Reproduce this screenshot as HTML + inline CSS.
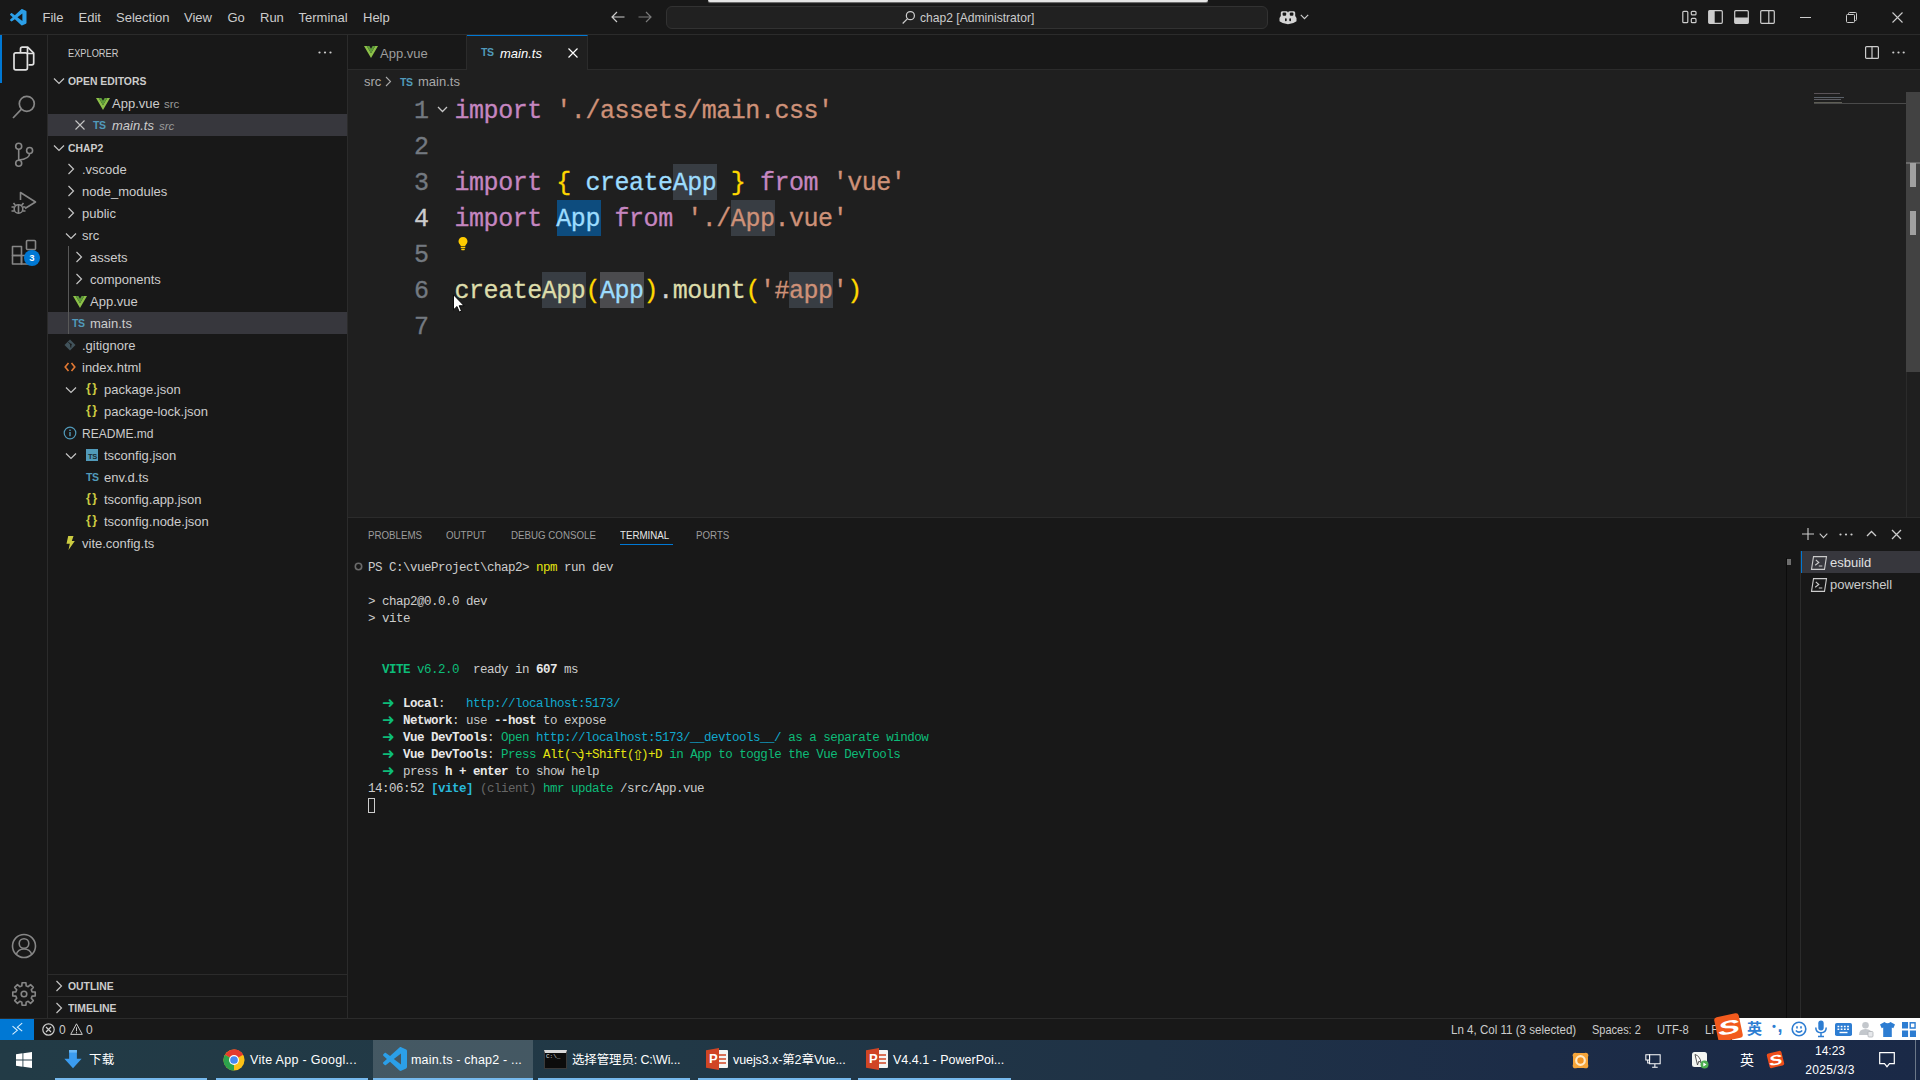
<!DOCTYPE html>
<html lang="en">
<head>
<meta charset="utf-8">
<title>main.ts - chap2 - Visual Studio Code</title>
<style>
*{box-sizing:border-box;margin:0;padding:0}
html,body{width:1920px;height:1080px;overflow:hidden;background:#181818}
body{position:relative;font-family:"Liberation Sans","Noto Sans CJK SC",sans-serif;font-size:13px;color:#cccccc;-webkit-font-smoothing:antialiased}
.abs{position:absolute}
svg{display:block;overflow:visible}
/* title bar */
#titlebar{position:absolute;left:0;top:0;width:1920px;height:35px;background:#181818;border-bottom:1px solid #2b2b2b}
#titlebar .menu{position:absolute;top:0;height:34px;line-height:36px;font-size:13px;color:#cccccc;white-space:nowrap}
#cmdcenter{position:absolute;left:666px;top:6px;width:602px;height:23px;border:1px solid #323232;border-radius:6px;background:#212121}
#cmdcenter span{position:absolute;left:0;top:1px;line-height:21px;font-size:12.1px;color:#cccccc;white-space:nowrap}
#whitebar{position:absolute;left:708px;top:0;width:500px;height:2px;background:#e6e6e6;border-radius:0 0 3px 3px;box-shadow:0 1px 1px #777}
/* activity bar */
#activity{position:absolute;left:0;top:35px;width:48px;height:983px;background:#181818;border-right:1px solid #2b2b2b}
#activity .ind{position:absolute;left:0;top:0;width:2px;height:48px;background:#0078d4}
/* sidebar */
#sidebar{position:absolute;left:48px;top:35px;width:300px;height:983px;background:#181818;border-right:1px solid #2b2b2b;overflow:hidden}
.row{position:absolute;left:0;width:299px;height:22px;line-height:22px;font-size:13px;color:#cccccc;white-space:nowrap}
.row .t{position:absolute;top:1px}
.row.sel{background:#37373d}
.hdr{font-weight:bold;font-size:11px;color:#cccccc;transform:scaleX(.945);transform-origin:0 50%}
.dim{color:#9a9a9a;font-size:11.5px}
.ic{position:absolute}
/* editor */
#tabs{position:absolute;left:348px;top:35px;width:1572px;height:35px;background:#181818;border-bottom:1px solid #2b2b2b}
.tab{position:absolute;top:0;height:35px;line-height:37px;font-size:13px;white-space:nowrap}
#crumbs{position:absolute;left:348px;top:70px;width:1572px;height:22px;background:#1f1f1f;line-height:24px;font-size:13px;color:#a9a9a9}
#editor{position:absolute;left:348px;top:92px;width:1572px;height:425px;background:#1f1f1f;overflow:hidden}
.ln{position:absolute;left:0;width:80.5px;text-align:right;height:36px;line-height:39.5px;font-family:"Liberation Mono",monospace;font-size:25px;letter-spacing:-0.46px;color:#737980;white-space:pre;-webkit-text-stroke:.3px}
.cl{position:absolute;left:106.5px;height:36px;line-height:39.5px;font-family:"Liberation Mono",monospace;font-size:25px;letter-spacing:-0.46px;color:#d4d4d4;white-space:pre;-webkit-text-stroke:.3px}
.k{color:#c586c0}.s{color:#ce9178}.v{color:#9cdcfe}.f{color:#dcdcaa}.y{color:#ffd700}
.hl{position:absolute;height:36px;background:#383d43}
/* panel */
#panel{position:absolute;left:348px;top:517px;width:1572px;height:501px;background:#181818}
.ptab{position:absolute;top:7px;height:22px;line-height:22px;font-size:11px;color:#9d9d9d;white-space:nowrap;transform:scaleX(.885);transform-origin:0 50%}
.tl{position:absolute;left:20px;height:17px;line-height:17px;font-family:"Liberation Mono","DejaVu Sans Mono","DejaVu Sans",monospace;font-size:12.5px;letter-spacing:-0.5px;color:#cccccc;white-space:pre}
.tl b{font-weight:bold;color:#e8e8e8}
.w1{display:inline-block;width:7px;height:17px;vertical-align:top;text-align:center;letter-spacing:0;font-family:"DejaVu Sans",sans-serif;font-size:11px;line-height:17px;white-space:nowrap}
.ar{font-size:15px;text-indent:0;line-height:15px;overflow:visible}
.tl .g{color:#0dbc79}.tl .c{color:#11a8cd}.tl .yy{color:#e5e510}.tl .bb{color:#29b8db}.tl .gr{color:#666666}
/* status */
#status{position:absolute;left:0;top:1018px;width:1920px;height:22px;background:#181818;border-top:1px solid #2b2b2b;font-size:12px;line-height:21px;color:#cccccc;white-space:nowrap}
#status .t{position:absolute;top:1px;transform-origin:0 50%}
/* taskbar */
#taskbar{position:absolute;left:0;top:1040px;width:1920px;height:40px;background:linear-gradient(90deg,#223b46 0%,#213846 35%,#1f3246 60%,#1c2c47 80%,#1a2947 100%);font-size:12px;color:#ffffff;white-space:nowrap}
.tb{position:absolute;top:0;height:40px}
.tb .ul{position:absolute;left:0;right:0;bottom:0;height:2px;background:#76b9ed}
.tb .lbl{position:absolute;top:1px;line-height:38px;font-size:12.5px;letter-spacing:.3px;color:#fff;font-family:"Liberation Sans","Noto Sans CJK SC",sans-serif}
</style>
</head>
<body>
<div id="titlebar">
  <svg class="abs" style="left:10px;top:9px" width="16.500" height="16.500" viewBox="0 0 100 100"><path d="M96.5 10.8 75.9 0.9c-2.4-1.2-5.200-0.700-7.100 1.200L29.400 38.000 12.200 25.000c-1.600-1.200-3.800-1.100-5.300 0.200L1.400 30.200c-1.800 1.600-1.800 4.500 0 6.100L16.300 50.000 1.400 63.600c-1.800 1.600-1.800 4.500 0 6.100l5.500 5.000c1.500 1.400 3.700 1.500 5.300 0.200l17.200-13.000 39.400 35.900c1.900 1.900 4.700 2.400 7.100 1.200l20.600-9.900c2.200-1.000 3.500-3.200 3.500-5.600V16.400c0-2.400-1.400-4.600-3.500-5.600zM75.000 72.700 45.100 50.000 75.000 27.300z" fill="#2b9fe8"/></svg>
  <span class="menu" style="left:42.500px">File</span>
  <span class="menu" style="left:78.500px">Edit</span>
  <span class="menu" style="left:116px">Selection</span>
  <span class="menu" style="left:184px">View</span>
  <span class="menu" style="left:227.500px">Go</span>
  <span class="menu" style="left:260px">Run</span>
  <span class="menu" style="left:298.500px">Terminal</span>
  <span class="menu" style="left:363px">Help</span>
  <!-- nav arrows -->
  <svg class="abs" style="left:610px;top:9px" width="16" height="16" viewBox="0 0 16 16" fill="none" stroke="#cccccc" stroke-width="1.200"><path d="M14.500 8H2M7 3 2 8l5 5"/></svg>
  <svg class="abs" style="left:637px;top:9px" width="16" height="16" viewBox="0 0 16 16" fill="none" stroke="#7a7a7a" stroke-width="1.200"><path d="M1.500 8H14M9 3l5 5-5 5"/></svg>
  <div id="cmdcenter">
    <svg class="abs" style="left:234px;top:3px" width="15" height="15" viewBox="0 0 16 16" fill="none" stroke="#cccccc" stroke-width="1.300"><circle cx="10" cy="6" r="4.300"/><path d="M7 9.200 1.800 14.400"/></svg>
    <span style="left:253px">chap2 [Administrator]</span>
  </div>
  <div id="whitebar"></div>
  <!-- copilot -->
  <svg class="abs" style="left:1279px;top:9px" width="18" height="16" viewBox="0 0 18 16"><path d="M3.200 2.200h4.300q1.500 0 1.500 1.500 0-1.500 1.500-1.500h4.300q1.400 0 1.400 1.500v3.200l1.300 2.200v3.200q-3.500 2.900-8.500 2.900T0.500 12.300V9.100l1.300-2.200V3.700q0-1.500 1.400-1.500z" fill="#d4d4d4"/><rect x="3.600" y="3.600" width="3.600" height="3.200" rx="1" fill="#181818"/><rect x="10.800" y="3.600" width="3.600" height="3.200" rx="1" fill="#181818"/><rect x="6" y="9.300" width="1.700" height="3" rx=".8" fill="#181818"/><rect x="10.300" y="9.300" width="1.700" height="3" rx=".8" fill="#181818"/></svg>
  <svg class="abs" style="left:1300px;top:14px" width="9" height="6" viewBox="0 0 9 6" fill="none" stroke="#cccccc" stroke-width="1.200"><path d="M.8.800 4.500 4.600 8.200.8"/></svg>
  <!-- layout controls -->
  <svg class="abs" style="left:1682px;top:10px" width="15" height="14" viewBox="0 0 15 14" fill="none" stroke="#cccccc" stroke-width="1.200"><rect x=".8" y="1.300" width="5" height="11.400" rx="1"/><rect x="9.300" y="1.300" width="4.700" height="3.600" rx="1"/><rect x="9.300" y="8.400" width="4.700" height="4.300" rx="1"/></svg>
  <svg class="abs" style="left:1708px;top:10px" width="15" height="14" viewBox="0 0 15 14"><rect x=".7" y=".7" width="13.600" height="12.600" rx="1" fill="none" stroke="#cccccc" stroke-width="1.200"/><rect x=".7" y=".7" width="6" height="12.600" fill="#cccccc"/></svg>
  <svg class="abs" style="left:1734px;top:10px" width="15" height="14" viewBox="0 0 15 14"><rect x=".7" y=".7" width="13.600" height="12.600" rx="1" fill="none" stroke="#cccccc" stroke-width="1.200"/><rect x=".7" y="7.500" width="13.600" height="5.800" fill="#cccccc"/></svg>
  <svg class="abs" style="left:1760px;top:10px" width="15" height="14" viewBox="0 0 15 14" fill="none" stroke="#cccccc" stroke-width="1.200"><rect x=".7" y=".7" width="13.600" height="12.600" rx="1"/><path d="M8.800.7v12.600"/></svg>
  <!-- window controls -->
  <svg class="abs" style="left:1800px;top:17px" width="11" height="1" viewBox="0 0 11 1"><rect width="11" height="1" fill="#cccccc"/></svg>
  <svg class="abs" style="left:1846px;top:12px" width="11" height="11" viewBox="0 0 11 11" fill="none" stroke="#cccccc" stroke-width="1"><rect x=".5" y="2.500" width="8" height="8" rx="1"/><path d="M2.500 2.500V1.500q0-1 1-1h6q1 0 1 1v6q0 1-1 1H8.500"/></svg>
  <svg class="abs" style="left:1892px;top:12px" width="11" height="11" viewBox="0 0 11 11" fill="none" stroke="#cccccc" stroke-width="1.100"><path d="M.5.500l10 10M10.500.5l-10 10"/></svg>
</div>
<div id="activity">
  <div class="ind"></div>
  <!-- explorer (files) -->
  <svg class="abs" style="left:12px;top:11px" width="24" height="26" viewBox="0 0 24 26" fill="none" stroke="#e0e0e0" stroke-width="1.700" stroke-linejoin="round"><path d="M8.500 6V3q0-1.800 1.800-1.800h5.400l6 6V17q0 1.800-1.800 1.800H16.500"/><path d="M15.500 1.500v6h6"/><path d="M3.800 6.800h9.800q1.800 0 1.800 1.800v13.400q0 1.800-1.800 1.800H3.800Q2 23.800 2 22V8.600q0-1.800 1.800-1.800z"/></svg>
  <!-- search -->
  <svg class="abs" style="left:11px;top:59px" width="26" height="26" viewBox="0 0 26 26" fill="none" stroke="#868686" stroke-width="1.700"><circle cx="15.800" cy="9.800" r="7.500"/><path d="M10.500 15.200 2 24"/></svg>
  <!-- source control -->
  <svg class="abs" style="left:12px;top:106px" width="24" height="28" viewBox="0 0 24 28" fill="none" stroke="#868686" stroke-width="1.600"><circle cx="6.700" cy="5.300" r="3"/><circle cx="6.700" cy="22.300" r="3"/><circle cx="17.600" cy="9.500" r="3"/><path d="M6.700 8.300v11M17.600 12.500q0 5.500-10.900 6.500"/></svg>
  <!-- run & debug -->
  <svg class="abs" style="left:10px;top:154px" width="28" height="28" viewBox="0 0 28 28" fill="none" stroke="#868686" stroke-width="1.600" stroke-linejoin="round"><path d="M10.500 11V3.500L25.500 13 15 19.500"/><circle cx="8.500" cy="20" r="4.300"/><path d="M8.500 15.700v8.600M4.200 18H1.500M4.200 22H1.500M12.800 18h2.700M12.800 22h2.700M5.500 16.500 3.500 14M11.500 16.500l2-2.500"/></svg>
  <!-- extensions -->
  <svg class="abs" style="left:11px;top:204px" width="26" height="26" viewBox="0 0 26 26" fill="none" stroke="#868686" stroke-width="1.600" stroke-linejoin="round"><rect x="1.500" y="7.500" width="9" height="9"/><rect x="1.500" y="16.500" width="9" height="8.500"/><rect x="10.500" y="16.500" width="9" height="8.500"/><rect x="15.500" y="1.500" width="9" height="9" rx="1"/></svg>
  <div class="abs" style="left:24px;top:215px;width:16px;height:16px;border-radius:8px;background:#0078d4;color:#fff;font-size:9.500px;font-weight:bold;text-align:center;line-height:16px">3</div>
  <!-- account -->
  <svg class="abs" style="left:11px;top:898px" width="26" height="26" viewBox="0 0 26 26" fill="none" stroke="#868686" stroke-width="1.600"><circle cx="13" cy="13" r="11.500"/><circle cx="13" cy="10.500" r="4.800"/><path d="M5.200 21.500q1.800-5.500 7.800-5.500t7.800 5.500"/></svg>
  <!-- settings gear -->
  <svg class="abs" style="left:11px;top:946px" width="26" height="26" viewBox="0 0 26 26" fill="none" stroke="#868686" stroke-width="1.600" stroke-linejoin="round"><circle cx="13" cy="13" r="2.800"/><path d="M10.84 4.88 L11.07 1.76 L14.93 1.76 L15.16 4.88 L17.21 5.73 L19.58 3.69 L22.31 6.42 L20.27 8.79 L21.12 10.84 L24.24 11.07 L24.24 14.93 L21.12 15.16 L20.27 17.21 L22.31 19.58 L19.58 22.31 L17.21 20.27 L15.16 21.12 L14.93 24.24 L11.07 24.24 L10.84 21.12 L8.79 20.27 L6.42 22.31 L3.69 19.58 L5.73 17.21 L4.88 15.16 L1.76 14.93 L1.76 11.07 L4.88 10.84 L5.73 8.79 L3.69 6.42 L6.42 3.69 L8.79 5.73z"/></svg>
</div>
<div id="sidebar">
<div class="row" style="top:6px"><span class="t" style="left:20px;font-size:11px;color:#cccccc;transform:scaleX(.84);transform-origin:0 50%">EXPLORER</span><svg class="ic" style="left:270px;top:10px" width="14" height="3" viewBox="0 0 14 3" fill="#cccccc"><circle cx="1.500" cy="1.500" r="1.100"/><circle cx="7" cy="1.500" r="1.100"/><circle cx="12.500" cy="1.500" r="1.100"/></svg></div>
<div class="row" style="top:34px"><svg class="ic" style="left:5px;top:8px" width="12" height="8" viewBox="0 0 12 8" fill="none" stroke="#c5c5c5" stroke-width="1.200"><path d="M1 1.500 6 6.500 11 1.500"/></svg><span class="t hdr" style="left:20px">OPEN EDITORS</span></div>
<div class="row" style="top:57px"><svg class="ic" style="left:48px;top:6px" width="14" height="12" viewBox="0 0 14 12"><path d="M0 0h2.800L7 7.200 11.200 0H14L7 12z" fill="#8dc149"/><path d="M2.800 0h2.600L7 2.800 8.600 0h2.600L7 7.200z" fill="#5f9e3a"/></svg><span class="t" style="left:64px">App.vue</span><span class="t dim" style="left:116px">src</span></div>
<div class="row sel" style="top:79px"><svg class="ic" style="left:27px;top:6px" width="10" height="10" viewBox="0 0 10 10" fill="none" stroke="#c5c5c5" stroke-width="1.100"><path d="M.5.500l9 9M9.500.5l-9 9"/></svg><span class="ic" style="left:45px;top:0px;font-size:10.5px;font-weight:bold;color:#519aba;line-height:22px;letter-spacing:-0.300px">TS</span><span class="t" style="left:64px;font-style:italic">main.ts</span><span class="t dim" style="left:111px;font-style:italic">src</span></div>
<div class="row" style="top:101px"><svg class="ic" style="left:5px;top:8px" width="12" height="8" viewBox="0 0 12 8" fill="none" stroke="#c5c5c5" stroke-width="1.200"><path d="M1 1.500 6 6.500 11 1.500"/></svg><span class="t hdr" style="left:20px">CHAP2</span></div>
<div class="row" style="top:123px"><svg class="ic" style="left:19px;top:5px" width="8" height="12" viewBox="0 0 8 12" fill="none" stroke="#c5c5c5" stroke-width="1.200"><path d="M1.500 1 6.500 6 1.500 11"/></svg><span class="t" style="left:34px">.vscode</span></div>
<div class="row" style="top:145px"><svg class="ic" style="left:19px;top:5px" width="8" height="12" viewBox="0 0 8 12" fill="none" stroke="#c5c5c5" stroke-width="1.200"><path d="M1.500 1 6.500 6 1.500 11"/></svg><span class="t" style="left:34px">node_modules</span></div>
<div class="row" style="top:167px"><svg class="ic" style="left:19px;top:5px" width="8" height="12" viewBox="0 0 8 12" fill="none" stroke="#c5c5c5" stroke-width="1.200"><path d="M1.500 1 6.500 6 1.500 11"/></svg><span class="t" style="left:34px">public</span></div>
<div class="row" style="top:189px"><svg class="ic" style="left:17px;top:8px" width="12" height="8" viewBox="0 0 12 8" fill="none" stroke="#c5c5c5" stroke-width="1.200"><path d="M1 1.500 6 6.500 11 1.500"/></svg><span class="t" style="left:34px">src</span></div>
<div class="row" style="top:211px"><svg class="ic" style="left:27px;top:5px" width="8" height="12" viewBox="0 0 8 12" fill="none" stroke="#c5c5c5" stroke-width="1.200"><path d="M1.500 1 6.500 6 1.500 11"/></svg><span class="t" style="left:42px">assets</span></div>
<div class="row" style="top:233px"><svg class="ic" style="left:27px;top:5px" width="8" height="12" viewBox="0 0 8 12" fill="none" stroke="#c5c5c5" stroke-width="1.200"><path d="M1.500 1 6.500 6 1.500 11"/></svg><span class="t" style="left:42px">components</span></div>
<div class="row" style="top:255px"><svg class="ic" style="left:25px;top:6px" width="14" height="12" viewBox="0 0 14 12"><path d="M0 0h2.800L7 7.200 11.200 0H14L7 12z" fill="#8dc149"/><path d="M2.800 0h2.600L7 2.800 8.600 0h2.600L7 7.200z" fill="#5f9e3a"/></svg><span class="t" style="left:42px">App.vue</span></div>
<div class="row sel" style="top:277px"><span class="ic" style="left:24px;top:0px;font-size:10.5px;font-weight:bold;color:#519aba;line-height:22px;letter-spacing:-0.300px">TS</span><span class="t" style="left:42px">main.ts</span></div>
<div class="row" style="top:299px"><svg class="ic" style="left:16px;top:5px" width="12" height="12" viewBox="0 0 12 12"><path d="M6 .5 11.500 6 6 11.500.5 6z" fill="#41535b"/><path d="M4.500 3.200 6.800 5.500M6.800 5.500v3" stroke="#181818" stroke-width="1" fill="none"/><circle cx="6.800" cy="5.500" r=".9" fill="#181818"/></svg><span class="t" style="left:34px">.gitignore</span></div>
<div class="row" style="top:321px"><svg class="ic" style="left:16px;top:6px" width="12" height="10" viewBox="0 0 12 10" fill="none" stroke="#e37933" stroke-width="1.600"><path d="M4.500 1 1.200 5l3.300 4M7.500 1l3.300 4-3.300 4"/></svg><span class="t" style="left:34px">index.html</span></div>
<div class="row" style="top:343px"><svg class="ic" style="left:17px;top:8px" width="12" height="8" viewBox="0 0 12 8" fill="none" stroke="#c5c5c5" stroke-width="1.200"><path d="M1 1.500 6 6.500 11 1.500"/></svg><span class="ic" style="left:38px;top:0px;font-size:12.5px;font-weight:bold;color:#cbcb41;line-height:21px;letter-spacing:1.5px">{}</span><span class="t" style="left:56px">package.json</span></div>
<div class="row" style="top:365px"><span class="ic" style="left:38px;top:0px;font-size:12.5px;font-weight:bold;color:#cbcb41;line-height:21px;letter-spacing:1.5px">{}</span><span class="t" style="left:56px">package-lock.json</span></div>
<div class="row" style="top:387px"><svg class="ic" style="left:15px;top:4px" width="14" height="14" viewBox="0 0 14 14"><circle cx="7" cy="7" r="5.800" fill="none" stroke="#519aba" stroke-width="1.200"/><rect x="6.300" y="6" width="1.400" height="4.200" fill="#519aba"/><rect x="6.300" y="3.600" width="1.400" height="1.400" fill="#519aba"/></svg><span class="t" style="left:34px;transform:scaleX(.925);transform-origin:0 50%">README.md</span></div>
<div class="row" style="top:409px"><svg class="ic" style="left:17px;top:8px" width="12" height="8" viewBox="0 0 12 8" fill="none" stroke="#c5c5c5" stroke-width="1.200"><path d="M1 1.500 6 6.500 11 1.500"/></svg><span class="ic" style="left:38px;top:5px;width:12px;height:12px;background:#519aba;color:#1b2b33;font-size:7.500px;font-weight:bold;line-height:15px;text-align:right;padding-right:1px;letter-spacing:-0.300px">TS</span><span class="t" style="left:56px">tsconfig.json</span></div>
<div class="row" style="top:431px"><span class="ic" style="left:38px;top:0px;font-size:10.5px;font-weight:bold;color:#519aba;line-height:22px;letter-spacing:-0.300px">TS</span><span class="t" style="left:56px">env.d.ts</span></div>
<div class="row" style="top:453px"><span class="ic" style="left:38px;top:0px;font-size:12.5px;font-weight:bold;color:#cbcb41;line-height:21px;letter-spacing:1.5px">{}</span><span class="t" style="left:56px">tsconfig.app.json</span></div>
<div class="row" style="top:475px"><span class="ic" style="left:38px;top:0px;font-size:12.5px;font-weight:bold;color:#cbcb41;line-height:21px;letter-spacing:1.5px">{}</span><span class="t" style="left:56px">tsconfig.node.json</span></div>
<div class="row" style="top:497px"><svg class="ic" style="left:18px;top:4px" width="9" height="14" viewBox="0 0 9 14"><path d="M2.200 0h5.300L5.800 5h3L2.500 14l1.300-6.200H.5z" fill="#cbcb41"/></svg><span class="t" style="left:34px">vite.config.ts</span></div>
<div class="abs" style="left:20px;top:211px;width:1px;height:88px;background:#585858"></div>
<div class="abs" style="left:0;top:939px;width:299px;height:1px;background:#2b2b2b"></div>
<div class="abs" style="left:0;top:961px;width:299px;height:1px;background:#2b2b2b"></div>
<div class="row" style="top:939px"><svg class="ic" style="left:7px;top:6px" width="8" height="12" viewBox="0 0 8 12" fill="none" stroke="#c5c5c5" stroke-width="1.200"><path d="M1.500 1 6.500 6 1.500 11"/></svg><span class="t hdr" style="left:20px">OUTLINE</span></div>
<div class="row" style="top:961px"><svg class="ic" style="left:7px;top:6px" width="8" height="12" viewBox="0 0 8 12" fill="none" stroke="#c5c5c5" stroke-width="1.200"><path d="M1.500 1 6.500 6 1.500 11"/></svg><span class="t hdr" style="left:20px">TIMELINE</span></div>
</div>
<div id="tabs">
  <div class="tab" style="left:0;width:119px;border-right:1px solid #2b2b2b;color:#9d9d9d">
    <svg class="abs" style="left:16px;top:11px" width="14" height="12" viewBox="0 0 14 12"><path d="M0 0h2.800L7 7.200 11.200 0H14L7 12z" fill="#8dc149"/><path d="M2.800 0h2.600L7 2.800 8.600 0h2.600L7 7.200z" fill="#5f9e3a"/></svg>
    <span class="abs" style="left:32px;top:0">App.vue</span>
  </div>
  <div class="tab" style="left:119px;width:121px;height:36px;background:#1f1f1f;border-top:1px solid #0078d4;border-right:1px solid #2b2b2b;color:#ffffff">
    <span class="abs" style="left:14px;top:-2px;font-size:10.500px;font-weight:bold;color:#519aba;letter-spacing:-0.300px">TS</span>
    <span class="abs" style="left:33px;top:-1px;font-style:italic">main.ts</span>
    <svg class="abs" style="left:101px;top:12px" width="10" height="10" viewBox="0 0 10 10" fill="none" stroke="#ffffff" stroke-width="1.200"><path d="M.5.500l9 9M9.500.5l-9 9"/></svg>
  </div>
  <!-- editor actions -->
  <svg class="abs" style="left:1517px;top:11px" width="14" height="13" viewBox="0 0 14 13" fill="none" stroke="#cccccc" stroke-width="1.200"><rect x=".6" y=".6" width="12.800" height="11.800" rx="1"/><path d="M7 .6v11.800"/></svg>
  <svg class="abs" style="left:1544px;top:16px" width="13" height="3" viewBox="0 0 13 3" fill="#cccccc"><circle cx="1.300" cy="1.500" r="1.100"/><circle cx="6.500" cy="1.500" r="1.100"/><circle cx="11.700" cy="1.500" r="1.100"/></svg>
</div>
<div id="crumbs">
  <span class="abs" style="left:16px;top:0">src</span>
  <svg class="abs" style="left:37px;top:6px" width="7" height="11" viewBox="0 0 7 11" fill="none" stroke="#a9a9a9" stroke-width="1.100"><path d="M1 1 5.500 5.500 1 10"/></svg>
  <span class="abs" style="left:52px;top:0;font-size:10.500px;font-weight:bold;color:#519aba;letter-spacing:-0.300px">TS</span>
  <span class="abs" style="left:70px;top:0">main.ts</span>
</div>
<div id="editor">
  <!-- highlights -->
  <div class="hl" style="left:325px;top:72px;width:44px"></div>
  <div class="hl" style="left:208.500px;top:108px;width:44px;background:#0d4c7e"></div>
  <div class="hl" style="left:383px;top:108px;width:44px"></div>
  <div class="hl" style="left:194px;top:180px;width:44px"></div>
  <div class="hl" style="left:252px;top:180px;width:44px;background:#4b4b4e"></div>
  <div class="hl" style="left:441px;top:180px;width:44px"></div>
  <!-- line numbers -->
  <div class="ln" style="top:0">1</div>
  <div class="ln" style="top:36px">2</div>
  <div class="ln" style="top:72px">3</div>
  <div class="ln" style="top:108px;color:#cccccc">4</div>
  <div class="ln" style="top:144px">5</div>
  <div class="ln" style="top:180px">6</div>
  <div class="ln" style="top:216px">7</div>
  <svg class="abs" style="left:89px;top:14px" width="11" height="7" viewBox="0 0 11 7" fill="none" stroke="#c5c5c5" stroke-width="1.300"><path d="M1 1 5.500 5.500 10 1"/></svg>
  <!-- code -->
  <div class="cl" style="top:0"><span class="k">import</span> <span class="s">'./assets/main.css'</span></div>
  <div class="cl" style="top:72px"><span class="k">import</span> <span class="y">{</span> <span class="v">createApp</span> <span class="y">}</span> <span class="k">from</span> <span class="s">'vue'</span></div>
  <div class="cl" style="top:108px"><span class="k">import</span> <span class="v">App</span> <span class="k">from</span> <span class="s">'./App.vue'</span></div>
  <div class="cl" style="top:180px"><span class="f">createApp</span><span class="y">(</span><span class="v">App</span><span class="y">)</span>.<span class="f">mount</span><span class="y">(</span><span class="s">'#app'</span><span class="y">)</span></div>
  <!-- lightbulb -->
  <svg class="abs" style="left:109.500px;top:145px" width="10" height="13.500" viewBox="0 0 11 15"><path d="M5.500 0C2.500 0 .5 2.200.5 4.800c0 1.700.9 2.800 1.800 3.800.5.600.7 1 .7 1.700h5c0-.7.200-1.100.7-1.700.9-1 1.800-2.100 1.800-3.800C10.500 2.200 8.500 0 5.500 0z" fill="#ffcc00"/><rect x="3" y="11" width="5" height="1.400" fill="#ffcc00"/><rect x="3.500" y="13" width="4" height="1.600" rx=".7" fill="#ffcc00"/></svg>
  <!-- minimap -->
  <div class="abs" style="left:1466px;top:1px;width:26px;height:1px;background:#5a5358"></div>
  <div class="abs" style="left:1466px;top:5px;width:30px;height:1px;background:#5a6068"></div>
  <div class="abs" style="left:1466px;top:7px;width:27px;height:1px;background:#5c5c62"></div>
  <div class="abs" style="left:1466px;top:10px;width:28px;height:1px;background:#5e5e55"></div>
  <div class="abs" style="left:1466px;top:10px;width:92px;height:1px;background:#4a4a4a;top:11px"></div>
  <!-- scrollbar -->
  <div class="abs" style="left:1558px;top:0;width:14px;height:280px;background:#424242"></div>
  <div class="abs" style="left:1558px;top:70px;width:14px;height:2px;background:#6a6a6a"></div>
  <div class="abs" style="left:1562px;top:71px;width:6px;height:24px;background:#a0a0a0"></div>
  <div class="abs" style="left:1562px;top:119px;width:6px;height:24px;background:#a0a0a0"></div>
  <div class="abs" style="left:1558px;top:280px;width:1px;height:145px;background:#2b2b2b"></div>
</div>
<div id="panel">
  <div class="abs" style="left:0;top:0;width:1572px;height:1px;background:#2b2b2b"></div>
  <span class="ptab" style="left:20px">PROBLEMS</span>
  <span class="ptab" style="left:98px">OUTPUT</span>
  <span class="ptab" style="left:163px">DEBUG CONSOLE</span>
  <span class="ptab" style="left:272px;color:#e7e7e7">TERMINAL</span>
  <div class="abs" style="left:272px;top:27px;width:53px;height:1px;background:#0078d4"></div>
  <span class="ptab" style="left:348px">PORTS</span>
  <!-- actions -->
  <svg class="abs" style="left:1454px;top:11px" width="12" height="12" viewBox="0 0 12 12" fill="none" stroke="#cccccc" stroke-width="1.100"><path d="M6 0v12M0 6h12"/></svg>
  <svg class="abs" style="left:1471px;top:16px" width="9" height="6" viewBox="0 0 9 6" fill="none" stroke="#cccccc" stroke-width="1.100"><path d="M.7.700 4.500 4.700 8.300.7"/></svg>
  <svg class="abs" style="left:1491px;top:16px" width="14" height="3" viewBox="0 0 14 3" fill="#cccccc"><circle cx="1.500" cy="1.500" r="1.100"/><circle cx="7" cy="1.500" r="1.100"/><circle cx="12.500" cy="1.500" r="1.100"/></svg>
  <svg class="abs" style="left:1518px;top:13px" width="11" height="7" viewBox="0 0 11 7" fill="none" stroke="#cccccc" stroke-width="1.300"><path d="M1 6 5.500 1.500 10 6"/></svg>
  <svg class="abs" style="left:1543px;top:12px" width="11" height="11" viewBox="0 0 11 11" fill="none" stroke="#cccccc" stroke-width="1.300"><path d="M1 1l9 9M10 1l-9 9"/></svg>
  <!-- terminal -->
  <svg class="abs" style="left:6px;top:45px" width="9" height="9" viewBox="0 0 9 9" fill="none" stroke="#6b6b6b" stroke-width="1.600"><circle cx="4.500" cy="4.500" r="3.200"/></svg>
  <div class="tl" style="top:43px">PS C:\vueProject\chap2&gt; <span class="yy">npm</span> run dev</div>
  <div class="tl" style="top:77px">&gt; chap2@0.0.0 dev</div>
  <div class="tl" style="top:94px">&gt; vite</div>
  <div class="tl" style="top:145px">  <b class="g">VITE</b><span class="g"> v6.2.0</span>  ready in <b>607</b> ms</div>
  <div class="tl" style="top:179px">  <b class="g w1 ar">➜</b>  <b>Local</b>:   <span class="c">http://localhost:5173/</span></div>
  <div class="tl" style="top:196px">  <b class="g w1 ar">➜</b>  <b>Network</b>: use <b>--host</b> to expose</div>
  <div class="tl" style="top:213px">  <b class="g w1 ar">➜</b>  <b>Vue DevTools</b>: <span class="g">Open </span><span class="c">http://localhost:5173/__devtools__/</span><span class="g"> as a separate window</span></div>
  <div class="tl" style="top:230px">  <b class="g w1 ar">➜</b>  <b>Vue DevTools</b>: <span class="g">Press </span><span class="yy">Alt(<span class="w1" style="font-size:11px;line-height:15px">⌥</span>)+Shift(<span class="w1" style="font-size:14px;text-indent:-2px">⇧</span>)+D</span><span class="g"> in App to toggle the Vue DevTools</span></div>
  <div class="tl" style="top:247px">  <b class="g w1 ar">➜</b>  press <b>h + enter</b> to show help</div>
  <div class="tl" style="top:264px">14:06:52 <b class="bb">[vite]</b> <span class="gr">(client)</span> <span class="g">hmr update </span>/src/App.vue</div>
  <div class="abs" style="left:20px;top:281px;width:7px;height:15px;border:1px solid #cccccc"></div>
  <!-- terminal scrollbar + tabs list -->
  <div class="abs" style="left:1438px;top:41px;width:1px;height:460px;background:#0c0c0c"></div>
  <div class="abs" style="left:1439px;top:42px;width:4px;height:6px;background:#6e6e6e"></div>
  <div class="abs" style="left:1452px;top:34px;width:1px;height:467px;background:#2b2b2b"></div>
  <div class="abs" style="left:1453px;top:34px;width:119px;height:22px;background:#37373d;border-left:1px solid #0078d4"></div>
  <svg class="abs" style="left:1463px;top:39px" width="16" height="14" viewBox="0 0 16 14" fill="none" stroke="#cccccc" stroke-width="1.100"><path d="M2.500.6h13l-2 12.800H.5z"/><path d="M4.800 3.800 7.800 6.500 4.200 9.300M7.800 10h3.500"/></svg>
  <span class="abs" style="left:1482px;top:35px;line-height:22px;font-size:13px;color:#e0e0e0">esbuild</span>
  <svg class="abs" style="left:1463px;top:61px" width="16" height="14" viewBox="0 0 16 14" fill="none" stroke="#cccccc" stroke-width="1.100"><path d="M2.500.6h13l-2 12.800H.5z"/><path d="M4.800 3.800 7.800 6.500 4.200 9.300M7.800 10h3.500"/></svg>
  <span class="abs" style="left:1482px;top:57px;line-height:22px;font-size:13px;color:#cccccc">powershell</span>
</div>
<div id="status">
  <div class="abs" style="left:0;top:0;width:34px;height:21px;background:#0078d4"></div>
  <svg class="abs" style="left:11px;top:4px" width="12" height="13" viewBox="0 0 12 13" fill="none" stroke="#d8f0ff" stroke-width="1.100"><path d="M1.500 3.200 6.300 7.300 1.500 11.400M11.200 .2 6.400 4.200 11.200 8.200"/></svg>
  <svg class="abs" style="left:42px;top:4px" width="13" height="13" viewBox="0 0 13 13" fill="none" stroke="#cccccc" stroke-width="1.200"><circle cx="6.500" cy="6.500" r="5.700"/><path d="M4 4l5 5M9 4l-5 5"/></svg>
  <span class="t" style="left:59px">0</span>
  <svg class="abs" style="left:70px;top:4px" width="13" height="12" viewBox="0 0 13 12" fill="none" stroke="#cccccc" stroke-width="1"><path d="M6.500.8 12.300 11.400H.7z"/><path d="M6.500 4.300v4M6.500 9.200v1.200"/></svg>
  <span class="t" style="left:86px">0</span>
  <span class="t" style="left:1451px;transform:scaleX(.964)">Ln 4, Col 11 (3 selected)</span>
  <span class="t" style="left:1592px;transform:scaleX(.915)">Spaces: 2</span>
  <span class="t" style="left:1657px;transform:scaleX(.93)">UTF-8</span>
  <span class="t" style="left:1705px;transform:scaleX(.93)">LF</span>
</div>
<!-- Sogou IME toolbar -->
<div class="abs" style="left:1732px;top:1018px;width:188px;height:22px;background:#ffffff"></div>
<div class="abs" style="left:1716px;top:1015px;width:25px;height:25px;background:#f25a1d;border-radius:3px;transform:rotate(-12deg)"></div>
<span class="abs" style="left:1718px;top:1010px;width:22px;text-align:center;font-size:19px;line-height:36px;font-weight:bold;font-style:italic;color:#ffffff;transform:rotate(-10deg) scaleX(1.75)">S</span>
<span class="abs" style="left:1747px;top:1018px;line-height:21px;font-size:15px;font-weight:bold;color:#2d7dd2;font-family:'Liberation Sans','Noto Sans CJK SC',sans-serif">英</span>
<span class="abs" style="left:1772px;top:1015px;line-height:22px;font-size:11px;font-weight:bold;color:#2d7dd2">•</span><span class="abs" style="left:1777.500px;top:1015px;line-height:22px;font-size:18px;font-weight:bold;color:#2d7dd2">,</span>
<svg class="abs" style="left:1791px;top:1021px" width="16" height="16" viewBox="0 0 16 16" fill="none" stroke="#2d7dd2" stroke-width="1.600"><circle cx="8" cy="8" r="6.800"/><path d="M6 5.200v2.300M10 5.200v2.300M4.800 9.500q3.200 3.200 6.400 0"/></svg>
<svg class="abs" style="left:1814px;top:1020px" width="14" height="18" viewBox="0 0 14 18"><rect x="4.300" y=".5" width="5.400" height="10" rx="2.700" fill="#2d7dd2"/><path d="M1.800 7.500q0 5.200 5.200 5.200t5.200-5.200M7 12.700v3M4 16.500h6" fill="none" stroke="#2d7dd2" stroke-width="1.500"/></svg>
<svg class="abs" style="left:1835px;top:1023px" width="17" height="13" viewBox="0 0 17 13"><rect width="17" height="13" rx="1.800" fill="#2d7dd2"/><path d="M2.500 3.500h12M2.500 6.300h12" stroke="#fff" stroke-width="1.400" stroke-dasharray="1.800 1.400"/><path d="M4.500 9.500h8" stroke="#fff" stroke-width="1.400"/></svg>
<svg class="abs" style="left:1859px;top:1021px" width="15" height="17" viewBox="0 0 15 17"><circle cx="6.500" cy="4.200" r="3.300" fill="#c3c7cc"/><path d="M0 14q0-6 6.500-6T13 14z" fill="#c3c7cc"/><rect x="9" y="10.500" width="5" height="5.500" rx="1" fill="#e6e8eb" stroke="#b0b4b9" stroke-width=".8"/></svg>
<svg class="abs" style="left:1880px;top:1022px" width="15" height="15" viewBox="0 0 15 15"><path d="M4.500 0q3 2.500 6 0L15 2.500 13.300 6.300 11.800 5.600V15H3.200V5.600L1.700 6.300 0 2.500z" fill="#2d7dd2"/></svg>
<svg class="abs" style="left:1902px;top:1022px" width="14" height="15" viewBox="0 0 15 15" preserveAspectRatio="none"><rect x="0" y="0" width="6.500" height="6.500" fill="#2d7dd2"/><rect x="8.800" y=".8" width="5.200" height="5.200" fill="#fff" stroke="#2d7dd2" stroke-width="1.500"/><rect x="0" y="8.500" width="6.500" height="6.500" fill="#2d7dd2"/><rect x="8.500" y="8.500" width="6.500" height="6.500" fill="#2d7dd2"/></svg>
<!-- Windows taskbar -->
<div id="taskbar">
  <svg class="abs" style="left:16px;top:12px" width="16" height="16" viewBox="0 0 17 17" fill="#ffffff"><path d="M0 2.400 6.900 1.400v6.700H0zM7.800 1.300 17 0v8.100H7.800zM0 8.900h6.900v6.700L0 14.600zM7.800 8.900H17V17l-9.200-1.300z"/></svg>
  <div class="tb" style="left:55px;width:152px"><div class="ul"></div>
    <svg class="abs" style="left:9px;top:10px" width="18" height="19" viewBox="0 0 20 22"><path d="M5.500 0h9v10H20L10 21 0 10h5.500z" fill="#3b9cf0"/><path d="M5.500 0h9v3h-9z" fill="#6ab8f7"/></svg>
    <span class="lbl" style="left:34px">下载</span></div>
  <div class="tb" style="left:216px;width:152px"><div class="ul"></div>
    <svg class="abs" style="left:7px;top:9px" width="22" height="22" viewBox="0 0 24 24"><circle cx="12" cy="12" r="11.500" fill="#fbc116"/><path d="M12 12 2.050 6.250A11.500 11.500 0 0 1 21.950 6.250z" fill="#e33b2e"/><path d="M12 12 2.050 6.250A11.500 11.500 0 0 0 12 23.500z" fill="#2ca24c"/><path d="M12 .5a11.500 11.500 0 0 1 9.950 5.750H12z" fill="#e33b2e"/><circle cx="12" cy="12" r="5.400" fill="#ffffff"/><circle cx="12" cy="12" r="4.200" fill="#4688f1"/></svg>
    <span class="lbl" style="left:34px">Vite App - Googl...</span></div>
  <div class="tb" style="left:373px;width:160px;background:rgba(255,255,255,0.16)"><div class="ul"></div>
    <svg class="abs" style="left:10px;top:7px" width="24" height="24" viewBox="0 0 100 100"><path d="M96.500 10.800 75.900.9c-2.400-1.200-5.200-.7-7.100 1.200L29.400 38 12.200 25c-1.600-1.200-3.800-1.100-5.300.2L1.400 30.200c-1.800 1.600-1.800 4.500 0 6.100L16.300 50 1.400 63.600c-1.800 1.600-1.800 4.500 0 6.100l5.500 5c1.500 1.400 3.700 1.500 5.300.2l17.200-13 39.400 35.900c1.900 1.900 4.700 2.400 7.100 1.200l20.600-9.900c2.200-1 3.500-3.200 3.500-5.600V16.400c0-2.400-1.400-4.600-3.500-5.600zM75 72.700 45.100 50 75 27.300z" fill="#2b9fe8"/></svg>
    <span class="lbl" style="left:38px;letter-spacing:.19px">main.ts - chap2 - ...</span></div>
  <div class="tb" style="left:538px;width:152px"><div class="ul"></div>
    <div class="abs" style="left:6px;top:10px;width:23px;height:19px;background:#0c0c0c;border:1px solid #3a3a3a;border-top:3px solid #d8d8d8"></div>
    <span class="abs" style="left:8px;top:13px;font-size:6px;line-height:7px;color:#ddd;font-family:'Liberation Mono',monospace">C:\_</span>
    <span class="lbl" style="left:34px;letter-spacing:-.14px">选择管理员: C:\Wi...</span></div>
  <div class="tb" style="left:698px;width:153px"><div class="ul"></div>
    <svg class="abs" style="left:8px;top:8px" width="22" height="22" viewBox="0 0 22 22"><rect x="8" y="2" width="14" height="18" rx="1" fill="#f4f4f4"/><path d="M11 7h9M11 11h9M11 15h9" stroke="#d04525" stroke-width="1.600"/><path d="M0 2.200 13 0v22L0 19.800z" fill="#d04525"/></svg>
    <span class="abs" style="left:11px;top:10px;font-size:13px;line-height:18px;font-weight:bold;color:#fff">P</span>
    <span class="lbl" style="left:35px;letter-spacing:-.09px">vuejs3.x-第2章Vue...</span></div>
  <div class="tb" style="left:858px;width:153px"><div class="ul"></div>
    <svg class="abs" style="left:8px;top:8px" width="22" height="22" viewBox="0 0 22 22"><rect x="8" y="2" width="14" height="18" rx="1" fill="#f4f4f4"/><path d="M11 7h9M11 11h9M11 15h9" stroke="#d04525" stroke-width="1.600"/><path d="M0 2.200 13 0v22L0 19.800z" fill="#d04525"/></svg>
    <span class="abs" style="left:11px;top:10px;font-size:13px;line-height:18px;font-weight:bold;color:#fff">P</span>
    <span class="lbl" style="left:35px;letter-spacing:0">V4.4.1 - PowerPoi...</span></div>
  <!-- tray -->
  <svg class="abs" style="left:1572px;top:12px" width="17" height="17" viewBox="0 0 17 17"><rect x="1" y="1" width="15" height="15" rx="4.500" fill="#f6a53a"/><circle cx="3.300" cy="3.300" r="2.600" fill="#f6a53a"/><circle cx="13.700" cy="3.300" r="2.600" fill="#f6a53a"/><circle cx="3.300" cy="13.700" r="2.600" fill="#f6a53a"/><circle cx="13.700" cy="13.700" r="2.600" fill="#f6a53a"/><circle cx="8.500" cy="8.500" r="4.300" fill="#f29322" stroke="#ffe9c4" stroke-width="2.200"/></svg>
  <svg class="abs" style="left:1645px;top:14px" width="16" height="14.500" viewBox="0 0 18 17" fill="none" stroke="#ffffff" stroke-width="1.200"><path d="M5 1h12.400v10.500H5zM8 15.500h6.500M11.200 11.500v4"/><path d="M.6 1h4.400v6H.6zM2.800 7v3.500h2.200"/></svg>
  <svg class="abs" style="left:1692px;top:12px" width="17" height="17" viewBox="0 0 17 17"><rect width="15" height="15" rx="2.500" fill="#f3f6f3"/><path d="M3 2.500q5 1.500 6 8l-2.200-1.300L5.500 13z" fill="#fff" stroke="#444" stroke-width=".9"/><circle cx="12.500" cy="12.500" r="4" fill="#4caf50"/><path d="M11.300 10.500v4l3.200-2z" fill="#fff"/></svg>
  <span class="abs" style="left:1740px;top:10px;font-size:14px;line-height:20px;color:#fff;font-family:'Liberation Sans','Noto Sans CJK SC',sans-serif">英</span>
  <div class="abs" style="left:1768px;top:12px;width:15px;height:15px;background:#ee4d1a;border-radius:2px;transform:rotate(-14deg)"></div>
  <span class="abs" style="left:1768px;top:9px;width:15px;text-align:center;font-size:14px;line-height:22px;font-weight:bold;font-style:italic;color:#fff;transform:rotate(-10deg) scaleX(1.45)">S</span>
  <span class="abs" style="left:1800px;top:3px;width:60px;text-align:center;font-size:12px;line-height:16px;color:#fff">14:23</span>
  <span class="abs" style="left:1800px;top:22px;width:60px;text-align:center;font-size:12px;line-height:16px;letter-spacing:.35px;color:#fff">2025/3/3</span>
  <svg class="abs" style="left:1879px;top:12px" width="16" height="16" viewBox="0 0 16 16" fill="none" stroke="#ffffff" stroke-width="1.200"><path d="M.7.700h14.600v11H10.500L8 14.700 5.500 11.700H.7z"/></svg>
  <div class="abs" style="left:1915px;top:0;width:1px;height:40px;background:#6b7788"></div>
</div>
<!-- mouse cursor -->
<svg class="abs" style="left:453px;top:294px" width="12" height="19" viewBox="0 0 12 19"><path d="M.5.800v15l3.500-3.300 2.300 5.500 2.200-.9-2.300-5.400h4.800z" fill="#ffffff" stroke="#000000" stroke-width=".9"/></svg>
</body>
</html>
